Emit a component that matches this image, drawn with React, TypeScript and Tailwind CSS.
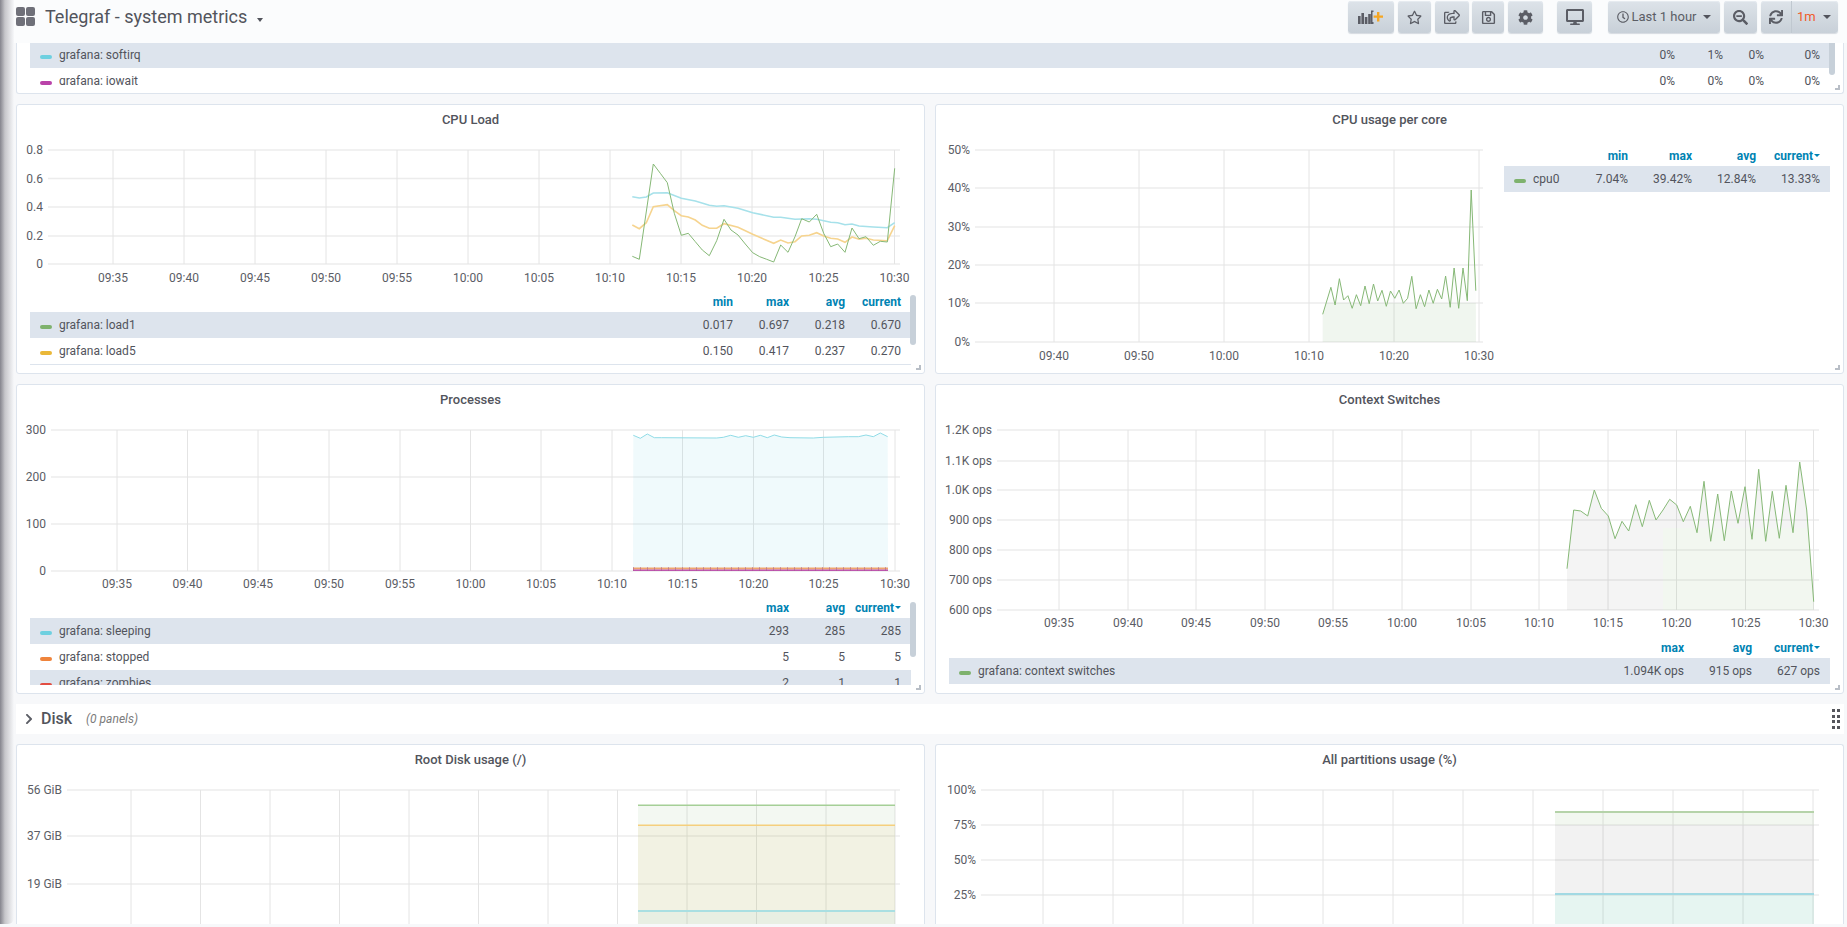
import type { ReactNode } from "react";
import {
  FaRegStar,
  FaRegShareSquare,
  FaRegSave,
  FaCog,
  FaDesktop,
  FaRegClock,
  FaSearchMinus,
  FaSync,
  FaChevronRight,
} from "react-icons/fa";

type LegendRow = { color: string; name: string; values: string[] };

const toPoints = (list: number[], ox: number, oy: number, sx = 3, sy = 3) => {
  const out: string[] = [];
  for (let i = 0; i < list.length; i += 2) {
    out.push(`${(ox + list[i] / sx).toFixed(1)},${(oy + list[i + 1] / sy).toFixed(1)}`);
  }
  return out.join(" ");
};

const load1 = [97,409,118,418,160,132,181,160,202,188,223,280,244,346,265,340,286,365,307,390,328,407,350,362,372,298,393,330,414,345,436,372,458,398,479,410,500,418,521,426,542,375,564,397,585,350,605,296,628,306,650,283,671,340,692,380,713,372,735,397,756,324,777,356,798,350,820,376,841,364,862,366,884,145];
const load15 = [97,230,118,234,139,231,160,219,202,218,244,235,286,243,328,256,350,259,372,257,414,265,458,278,521,292,542,292,585,298,628,296,650,298,692,307,713,308,735,314,756,312,777,318,820,321,862,323,884,308];
const load5 = [97,315,118,326,139,308,160,260,202,254,223,272,244,287,265,291,286,300,307,316,328,325,350,325,372,311,414,322,458,343,521,370,542,360,564,369,585,365,605,348,628,346,650,338,671,348,692,355,713,357,735,367,756,351,777,358,798,355,820,360,862,362,884,317];
const cpu0 = [92,553,115,472,127,525,139,446,151,510,163,497,175,535,187,494,199,527,211,468,223,521,235,462,247,513,259,481,271,529,283,483,295,505,307,480,319,520,331,505,343,439,355,536,367,494,379,530,391,480,403,520,415,478,427,507,438,438,451,532,462,414,475,535,487,414,499,512,510,180,523,482];
const sleeping = [100,46,121,55,142,42,163,53,184,53,350,54,370,52,392,46,415,52,437,47,460,52,481,46,502,53,523,45,545,51,570,53,640,54,670,52,745,50,775,50,798,45,820,50,841,39,863,50];
const ctx = [201,446,221,270,242,273,263,288,283,210,304,265,325,288,345,356,366,304,386,333,407,254,427,320,448,241,468,300,489,270,509,238,530,255,550,305,571,259,591,338,612,184,632,364,653,222,673,362,694,213,714,310,735,200,756,358,776,148,797,364,817,214,838,355,858,196,879,338,899,126,920,270,941,545];

function Chart(props: {
  box: [number, number, number, number];
  left: number;
  right: number;
  hLines: number[];
  yLabels: string[];
  vLines: number[];
  xLabels?: string[];
  labelY?: number;
  children?: ReactNode;
}) {
  const { box, left, right, hLines, yLabels, vLines, xLabels, labelY } = props;
  const top = hLines[0];
  const bottom = xLabels ? hLines[hLines.length - 1] : box[1] + box[3];
  return (
    <svg
      width={box[2]}
      height={box[3]}
      viewBox={box.join(" ")}
      className="block shrink-0"
    >
      {hLines.map((y) => (
        <line key={y} x1={left} x2={right} y1={y} y2={y} stroke="#ececec" strokeWidth="1.4" />
      ))}
      {vLines.map((x) => (
        <line key={x} x1={x} x2={x} y1={top} y2={bottom} stroke="#e4e4e4" strokeWidth="1" />
      ))}
      {props.children}
      {yLabels.map((t, i) => (
        <text key={t} x={left - 5} y={hLines[i] + 4} textAnchor="end" fontSize="12" fill="#5b5d65">
          {t}
        </text>
      ))}
      {xLabels &&
        xLabels.map((t, i) => (
          <text key={t} x={vLines[i]} y={labelY} textAnchor="middle" fontSize="12" fill="#5b5d65">
            {t}
          </text>
        ))}
    </svg>
  );
}

function Legend(props: {
  heads?: string[];
  widths: string[];
  rows: LegendRow[];
  sorted?: boolean;
  className?: string;
}) {
  return (
    <div className={"overflow-hidden text-xs text-[#52545c] " + (props.className ?? "")}>
      {props.heads && (
        <div className="flex h-5 items-center justify-end pr-[10px] font-bold text-[#0083b3]">
          {props.heads.map((h, i) => (
            <div key={h} className={props.widths[i] + " whitespace-nowrap text-right"}>
              {h}
              {props.sorted && i === props.heads!.length - 1 && (
                <span className="mb-[2px] ml-px inline-block border-x-[3.5px] border-t-[3.5px] border-x-transparent border-t-[#0083b3] align-middle" />
              )}
            </div>
          ))}
        </div>
      )}
      {props.rows.map((r, i) => (
        <div
          key={r.name}
          className={"flex h-[26px] items-center pl-[10px] pr-[10px] " + (i % 2 === 0 ? "bg-[#dde4ed]" : "")}
        >
          <i className="mt-1 h-1 w-3 shrink-0 rounded-sm" style={{ backgroundColor: r.color }} />
          <div className="ml-[7px] flex-1 whitespace-nowrap">{r.name}</div>
          {r.values.map((v, j) => (
            <div key={j} className={props.widths[j] + " text-right"}>
              {v}
            </div>
          ))}
        </div>
      ))}
    </div>
  );
}

function Panel(props: { title?: string; className?: string; children: ReactNode }) {
  return (
    <div className={"relative overflow-hidden rounded-[3px] border border-[#dde4ed] bg-white " + (props.className ?? "")}>
      {props.title && (
        <div className="flex h-[29px] items-center justify-center pt-[1px] text-[13px] font-medium text-[#52545c]">
          {props.title}
        </div>
      )}
      {props.children}
    </div>
  );
}

const Handle = () => (
  <div className="absolute bottom-[3px] right-[3px] h-[5px] w-[5px] border-b-2 border-r-2 border-[#b8bec6]" />
);

const Caret = () => (
  <span className="inline-block border-x-4 border-t-4 border-x-transparent border-t-[#52545c]" />
);

function Btn(props: { className: string; children: ReactNode }) {
  return (
    <div
      className={
        "flex h-8 items-center rounded-[3px] bg-linear-to-b from-[#dde3e9] to-[#c8d0d8] text-[#5b5d65] shadow-[inset_0_1px_0_#e6ebf0,0_1px_1px_#d5dae0] " +
        props.className
      }
    >
      {props.children}
    </div>
  );
}

function AddPanelIcon() {
  return (
    <svg width="26" height="14" viewBox="0 0 26 14">
      <rect x="0" y="6" width="2.6" height="8" fill="#5b5d65" />
      <rect x="3.4" y="3" width="2.6" height="11" fill="#5b5d65" />
      <rect x="6.8" y="7" width="2.6" height="7" fill="#5b5d65" />
      <rect x="10.2" y="4" width="2.6" height="10" fill="#5b5d65" />
      <path d="M13 0.5h2.5v1.5h-1v10h1v2H13z" fill="#5b5d65" />
      <path d="M19 2h2.4v3.4h3.6v2.4h-3.6v3.6H19V7.800h-3.400V5.400H19z" fill="#f5a623" />
    </svg>
  );
}

export default function App() {
  const xTimes5 = ["09:35","09:40","09:45","09:50","09:55","10:00","10:05","10:10","10:15","10:20","10:25","10:30"];
  return (
    <div className="relative h-screen overflow-hidden bg-[#f7f8fa] font-['Roboto',sans-serif]">
      <div className="absolute left-0 top-0 z-10 h-[924px] w-[14px] rounded-br-md bg-linear-to-r from-[#85858d] via-[#c6c6ca] via-35% to-[#f7f8fa]" />

      {/* top bar */}
      <header className="flex h-[43px] items-start bg-[#fbfcfd] pl-4 pr-[9px] pt-px">
        <div className="mt-[6px] grid h-[19px] w-[19px] grid-cols-2 gap-[1.5px]">
          <span className="rounded-[2px] bg-[#6f7079]" />
          <span className="rounded-[2px] bg-[#6f7079]" />
          <span className="rounded-[2px] bg-[#6f7079]" />
          <span className="rounded-[2px] bg-[#6f7079]" />
        </div>
        <div className="ml-[10px] mt-[3px] whitespace-nowrap text-[18px] leading-[26px] text-[#52545c]">
          Telegraf - system metrics
        </div>
        <div className="ml-[10px] mt-[17px] flex">
          <span className="border-x-[3.5px] border-t-4 border-x-transparent border-t-[#52545c]" />
        </div>
        <div className="ml-auto flex">
          <Btn className="w-[46px] justify-center"><AddPanelIcon /></Btn>
          <Btn className="ml-1 w-[33px] justify-center"><FaRegStar size={15} /></Btn>
          <Btn className="ml-1 w-[34px] justify-center"><FaRegShareSquare size={16} /></Btn>
          <Btn className="ml-[3px] w-[32px] justify-center"><FaRegSave size={15} /></Btn>
          <Btn className="ml-1 w-[35px] justify-center"><FaCog size={15} /></Btn>
          <Btn className="ml-[14px] w-[35px] justify-center"><FaDesktop size={18} /></Btn>
          <Btn className="ml-4 w-[112px] justify-center gap-[3px] text-[13px]">
            <FaRegClock size={12} />
            <span>Last 1 hour</span>
            <span className="ml-1 flex"><Caret /></span>
          </Btn>
          <Btn className="ml-1 w-[33px] justify-center"><FaSearchMinus size={15} /></Btn>
          <Btn className="ml-1 w-[30px] justify-center rounded-r-none"><FaSync size={14} /></Btn>
          <Btn className="w-[47px] gap-[7px] rounded-l-none border-l border-[#c0c8d0] pl-[5px] text-[13px]">
            <span className="text-[#f05a28]">1m</span>
            <span className="flex"><Caret /></span>
          </Btn>
        </div>
      </header>

      <main className="flex flex-col pl-4 pr-[3px]">
        {/* cut off top panel */}
        <Panel className="h-[51px] rounded-t-none border-t-0">
          <Legend
            className="mx-[13px] -mt-px h-[43px]"
            widths={["w-[48px]", "w-[48px]", "w-[41px]", "w-[56px]"]}
            rows={[
              { color: "#6ed0e0", name: "grafana: softirq", values: ["0%", "1%", "0%", "0%"] },
              { color: "#ba43a9", name: "grafana: iowait", values: ["0%", "0%", "0%", "0%"] },
            ]}
          />
          <div className="absolute right-[8px] top-0 h-8 w-[6px] rounded-b-sm bg-[#c7d0d9]" />
          <Handle />
        </Panel>

        <div className="mt-[10px] grid grid-cols-2 gap-x-[10px] gap-y-[10px]">
          <Panel title="CPU Load" className="h-[270px]">
            <Chart
              box={[17, 134, 907, 158]}
              left={48}
              right={900}
              hLines={[150, 178.5, 207, 236, 264]}
              yLabels={["0.8", "0.6", "0.4", "0.2", "0"]}
              vLines={[113, 184, 255, 326, 397, 468, 539, 610, 681, 752, 823.500, 894.500]}
              xLabels={xTimes5}
              labelY={282}
            >
              <polyline points={toPoints(load15, 600, 120)} fill="none" stroke="#a6e1ea" strokeWidth="1.6" />
              <polyline points={toPoints(load5, 600, 120)} fill="none" stroke="#f6d48f" strokeWidth="1.6" />
              <polyline points={toPoints(load1, 600, 120)} fill="none" stroke="#86b876" strokeWidth="1" />
            </Chart>
            <Legend
              className="mx-[13px] h-[73px] border-b border-[#dde4ed]"
              heads={["min", "max", "avg", "current"]}
              widths={["w-[56px]", "w-[56px]", "w-[56px]", "w-[56px]"]}
              rows={[
                { color: "#7eb26d", name: "grafana: load1", values: ["0.017", "0.697", "0.218", "0.670"] },
                { color: "#eab839", name: "grafana: load5", values: ["0.150", "0.417", "0.237", "0.270"] },
              ]}
            />
            <div className="absolute right-[8px] top-[190px] h-[50px] w-[6px] rounded-sm bg-[#c7d0d9]" />
            <Handle />
          </Panel>

          <Panel title="CPU usage per core" className="h-[270px]">
            <div className="flex">
              <Chart
                box={[936, 134, 564, 232]}
                left={975}
                right={1483}
                hLines={[150, 188, 227, 265, 303, 342]}
                yLabels={["50%", "40%", "30%", "20%", "10%", "0%"]}
                vLines={[1054, 1139, 1224, 1309, 1394, 1479]}
                xLabels={["09:40", "09:50", "10:00", "10:10", "10:20", "10:30"]}
                labelY={360}
              >
                <clipPath id="cpuLow"><rect x="1300" y="303" width="200" height="40" /></clipPath>
                <polygon points={`${toPoints(cpu0, 1290, 130, 2.815, 3)} 1476,342 1322.700,342`} fill="#7eb26d" opacity="0.02" />
                <polygon points={`${toPoints(cpu0, 1290, 130, 2.815, 3)} 1476,342 1322.700,342`} fill="#7eb26d" opacity="0.09" clipPath="url(#cpuLow)" />
                <polyline points={toPoints(cpu0, 1290, 130, 2.815, 3)} fill="none" stroke="#86b876" strokeWidth="1" />
              </Chart>
              <Legend
                className="ml-1 mt-3 w-[326px]"
                heads={["min", "max", "avg", "current"]}
                sorted
                widths={["w-[64px]", "w-[64px]", "w-[64px]", "w-[64px]"]}
                rows={[{ color: "#7eb26d", name: "cpu0", values: ["7.04%", "39.42%", "12.84%", "13.33%"] }]}
              />
            </div>
            <Handle />
          </Panel>

          <Panel title="Processes" className="h-[310px]">
            <Chart
              box={[17, 414, 907, 184]}
              left={51}
              right={900}
              hLines={[430, 477, 524, 571]}
              yLabels={["300", "200", "100", "0"]}
              vLines={[117, 187.500, 258, 329, 400, 470.500, 541, 612, 682.500, 753.500, 823.500, 895]}
              xLabels={xTimes5}
              labelY={588}
            >
              <polygon points={`${toPoints(sleeping, 600, 420)} 888,571 633,571`} fill="#6ed0e0" opacity="0.1" />
              <rect x="633" y="567.500" width="255" height="2" fill="#efa56e" />
              <rect x="633" y="569.500" width="255" height="1.500" fill="#bd55ae" />
              <line x1="633" x2="888" y1="569" y2="569" stroke="#a85a8c" strokeWidth="4" strokeDasharray="1 6" opacity="0.5" />
              <polyline points={toPoints(sleeping, 600, 420)} fill="none" stroke="#8fdbe6" strokeWidth="1" />
            </Chart>
            <Legend
              className="mx-[13px] h-[87px]"
              heads={["max", "avg", "current"]}
              sorted
              widths={["w-[46px]", "w-[56px]", "w-[56px]"]}
              rows={[
                { color: "#6ed0e0", name: "grafana: sleeping", values: ["293", "285", "285"] },
                { color: "#ef843c", name: "grafana: stopped", values: ["5", "5", "5"] },
                { color: "#e24d42", name: "grafana: zombies", values: ["2", "1", "1"] },
              ]}
            />
            <div className="absolute right-[8px] top-[217px] h-[55px] w-[6px] rounded-sm bg-[#c7d0d9]" />
            <Handle />
          </Panel>

          <Panel title="Context Switches" className="h-[310px]">
            <Chart
              box={[936, 414, 907, 224]}
              left={997}
              right={1819}
              hLines={[430, 461, 490, 520, 550, 580, 610]}
              yLabels={["1.2K ops", "1.1K ops", "1.0K ops", "900 ops", "800 ops", "700 ops", "600 ops"]}
              vLines={[1059, 1128, 1196, 1265, 1333, 1402, 1471, 1539, 1608, 1676.500, 1745.500, 1813.500]}
              xLabels={xTimes5}
              labelY={627}
            >
              <clipPath id="ctxRest"><path d="M1500 420h330v108h-330zM1500 528h163v90h-163z" /></clipPath>
              <clipPath id="ctxLow"><rect x="1663" y="528" width="160" height="90" /></clipPath>
              <polygon points={`${toPoints(ctx, 1500, 420)} 1813.700,610 1567,610`} fill="#000" opacity="0.045" clipPath="url(#ctxRest)" />
              <polygon points={`${toPoints(ctx, 1500, 420)} 1813.700,610 1567,610`} fill="#7eb26d" opacity="0.1" clipPath="url(#ctxLow)" />
              <polyline points={toPoints(ctx, 1500, 420)} fill="none" stroke="#86b876" strokeWidth="1" />
            </Chart>
            <Legend
              className="mx-[13px]"
              heads={["max", "avg", "current"]}
              sorted
              widths={["w-[68px]", "w-[68px]", "w-[68px]"]}
              rows={[{ color: "#7eb26d", name: "grafana: context switches", values: ["1.094K ops", "915 ops", "627 ops"] }]}
            />
            <Handle />
          </Panel>
        </div>

        {/* row header */}
        <div className="mt-[10px] flex h-[30px] items-center bg-white pl-[7px] pr-[4px]">
          <FaChevronRight size={12} className="text-[#5b5d65]" />
          <span className="ml-[6px] text-base font-medium text-[#52545c]">Disk</span>
          <span className="ml-[14px] text-xs italic text-[#7b7b7b]">(0 panels)</span>
          <div className="ml-auto grid grid-cols-2 gap-x-[2px] gap-y-[2.500px]">
            {[0, 1, 2, 3, 4, 5, 6, 7].map((d) => (
              <span key={d} className="h-[3px] w-[3px] bg-[#55565c]" />
            ))}
          </div>
        </div>

        <div className="mt-[10px] grid grid-cols-2 gap-x-[10px]">
          <Panel title="Root Disk usage (/)" className="h-[180px] rounded-b-none border-b-0">
            <Chart
              box={[17, 774, 907, 150]}
              left={67}
              right={900}
              hLines={[790, 836, 884]}
              yLabels={["56 GiB", "37 GiB", "19 GiB"]}
              vLines={[131, 200.500, 270, 339.500, 409, 478.500, 548, 617.500, 687, 756.500, 826, 895]}
            >
              <rect x="638" y="805" width="257" height="120" fill="#7eb26d" opacity="0.09" />
              <rect x="638" y="825" width="257" height="100" fill="#eab839" opacity="0.08" />
              <rect x="638" y="911" width="257" height="14" fill="#6ed0e0" opacity="0.08" />
              <rect x="638" y="804.500" width="257" height="1.500" fill="#a5cf97" />
              <rect x="638" y="824.500" width="257" height="1.500" fill="#f5cf7d" />
              <rect x="638" y="910" width="257" height="2" fill="#a9dfe2" />
            </Chart>
          </Panel>
          <Panel title="All partitions usage (%)" className="h-[180px] rounded-b-none border-b-0">
            <Chart
              box={[936, 774, 907, 150]}
              left={981}
              right={1819}
              hLines={[790, 825, 860, 895]}
              yLabels={["100%", "75%", "50%", "25%"]}
              vLines={[1043, 1113, 1183, 1253, 1323, 1393, 1463, 1533, 1603, 1673, 1743, 1813]}
            >
              <rect x="1555" y="812" width="259" height="13" fill="#7eb26d" opacity="0.1" />
              <rect x="1555" y="825" width="259" height="69" fill="#000" opacity="0.05" />
              <rect x="1555" y="894" width="259" height="31" fill="#3fae8f" opacity="0.13" />
              <rect x="1555" y="811" width="259" height="2" fill="#b5d3a9" />
              <rect x="1555" y="893" width="259" height="2" fill="#a2d9e3" />
            </Chart>
          </Panel>
        </div>
      </main>
    </div>
  );
}
